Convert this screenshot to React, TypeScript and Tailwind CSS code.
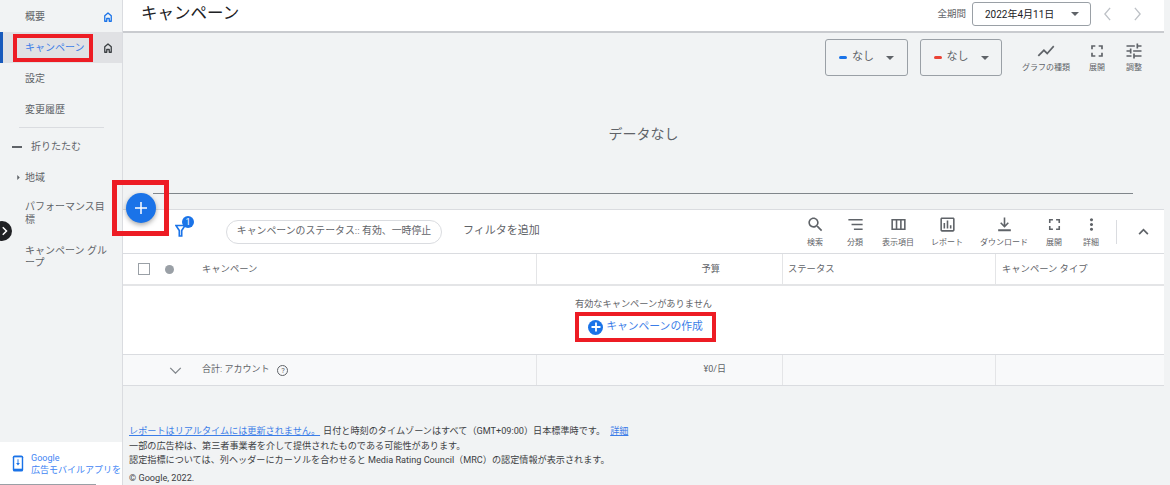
const P = {
  chart: "M3.5 18.49l6-6.01 4 4L22 6.92l-1.41-1.41-7.09 7.97-4-4L2 16.99z",
  full: "M7 14H5v5h5v-2H7v-3zm-2-4h2V7h3V5H5v5zm12 7h-3v2h5v-5h-2v3zM14 5v2h3v3h2V5h-5z",
  tune: "M3 17v2h6v-2H3zM3 5v2h10V5H3zm10 16v-2h8v-2h-8v-2h-2v6h2zM7 9v2H3v2h4v2h2V9H7zm14 4v-2H11v2h10zm-6-4h2V7h4V5h-4V3h-2v6z",
  search: "M15.5 14h-.79l-.28-.27C15.41 12.59 16 11.11 16 9.5 16 5.91 13.09 3 9.5 3S3 5.91 3 9.5 5.91 16 9.5 16c1.61 0 3.09-.59 4.23-1.57l.27.28v.79l5 4.99L20.49 19l-4.99-5zm-6 0C7.01 14 5 11.99 5 9.5S7.01 5 9.5 5 14 7.01 14 9.5 11.99 14 9.5 14z",
  sort: "M3 5h18v2H3zM7 11h14v2H7zM10 17h11v2H10z",
  cols: "M3 5v14h18V5H3zm5.5 12H5V7h3.5v10zm5.5 0h-3.5V7H14v10zm5 0h-3V7h3v10z",
  report: "M19 3H5c-1.1 0-2 .9-2 2v14c0 1.1.9 2 2 2h14c1.1 0 2-.9 2-2V5c0-1.1-.9-2-2-2zm0 16H5V5h14v14zM7 10h2v7H7zm4-3h2v10h-2zm4 6h2v4h-2z",
  download: "M11 3h2v9.2l3.1-3.1 1.4 1.4L12 16l-5.5-5.5 1.4-1.4 3.1 3.1V3zM4 18h16v2.5H4z",
  more: "M12 8c1.1 0 2-.9 2-2s-.9-2-2-2-2 .9-2 2 .9 2 2 2zm0 2c-1.1 0-2 .9-2 2s.9 2 2 2 2-.9 2-2-.9-2-2-2zm0 6c-1.1 0-2 .9-2 2s.9 2 2 2 2-.9 2-2-.9-2-2-2z",
};

function Ic({ d, className }: { d: string; className: string }) {
  return (
    <svg viewBox="0 0 24 24" className={className} fill="currentColor">
      <path d={d} />
    </svg>
  );
}

function Home({ className }: { className: string }) {
  return (
    <svg viewBox="0 0 24 24" className={className} fill="none" stroke="currentColor" strokeWidth="2.6">
      <path d="M5.5 20.5V9.5L12 4l6.5 5.5v11h-4v-5.5h-5v5.5z" strokeLinejoin="round" />
    </svg>
  );
}

function Caret({ className }: { className: string }) {
  return (
    <svg viewBox="0 0 10 5" className={className} fill="currentColor">
      <path d="M0 0h10L5 5z" />
    </svg>
  );
}

function ChartTool({ d, label, w }: { d: string; label: string; w: string }) {
  return (
    <div className={`flex flex-col items-center ${w}`}>
      <Ic d={d} className="w-[20px] h-[20px] text-[#5f6368]" />
      <span className="text-[8px] leading-[10px] mt-[2px] text-[#5f6368] whitespace-nowrap">{label}</span>
    </div>
  );
}

function TableTool({ d, label, w }: { d: string; label: string; w: string }) {
  return (
    <div className={`flex flex-col items-center ${w}`}>
      <Ic d={d} className="w-[19px] h-[19px] text-[#5f6368]" />
      <span className="text-[8px] leading-[10px] mt-[4px] text-[#5f6368] whitespace-nowrap">{label}</span>
    </div>
  );
}

function NavRow({ children, className = "" }: { children: React.ReactNode; className?: string }) {
  return <div className={`flex items-center pl-[25px] text-[10px] text-[#5f6368] ${className}`}>{children}</div>;
}

function Metric({ color, w }: { color: string; w: string }) {
  return (
    <div className={`h-[37px] border border-[#9aa0a6] rounded-[3px] flex items-center justify-center gap-[5px] ${w}`}>
      <span className={`w-[8px] h-[3px] rounded-[2px] ${color}`} />
      <span className="text-[11px] text-[#5f6368]">なし</span>
      <Caret className="w-[8px] h-[4px] ml-[7px] text-[#5f6368]" />
    </div>
  );
}

export default function App() {
  return (
    <div
      className="relative w-[1170px] h-[485px] overflow-hidden bg-[#f1f3f4] flex"
      style={{ fontFamily: 'Roboto, "Noto Sans CJK JP", sans-serif' }}
    >
      <aside className="relative w-[123px] h-full shrink-0 border-r border-[#dadce0] flex flex-col pt-[1px]">
        <div className="h-[31px] flex items-center justify-between pl-[25px] pr-[8px] text-[10px] text-[#5f6368]">
          <span>概要</span>
          <Home className="w-[12px] h-[12px] text-[#1a73e8]" />
        </div>
        <div className="h-[31px] flex items-center justify-between pl-[22px] pr-[8px] text-[10px] text-[#3b7de8] bg-[#e0e1e4] border-l-[3px] border-[#185abc]">
          <span>キャンペーン</span>
          <Home className="w-[12px] h-[12px] text-[#3c4043]" />
        </div>
        <NavRow className="h-[31px]">設定</NavRow>
        <NavRow className="h-[31px]">変更履歴</NavRow>
        <div className="h-px bg-[#dadce0] ml-[19px] mr-[18px] mt-[2px]" />
        <div className="h-[37px] flex items-center text-[10px] text-[#5f6368] pl-[12px]">
          <span className="w-[10px] h-[2px] bg-[#5f6368]" />
          <span className="ml-[9px]">折りたたむ</span>
        </div>
        <div className="h-[25px] flex items-center text-[10px] text-[#5f6368] pl-[16px]">
          <Caret className="w-[5px] h-[3px] -rotate-90 text-[#5f6368]" />
          <span className="ml-[4px]">地域</span>
        </div>
        <NavRow className="h-[46px] pr-[12px] leading-[13px]">パフォーマンス目標</NavRow>
        <NavRow className="h-[42px] pr-[12px] leading-[12px]">キャンペーン グループ</NavRow>
        <div className="mt-auto h-[43px] bg-white flex items-center pl-[12px] text-[9px] leading-[12px] text-[#4285f4] whitespace-nowrap">
          <svg viewBox="0 0 12 18" className="w-[12px] h-[17px] shrink-0 mr-[7px]">
            <rect x="0.5" y="0.5" width="11" height="17" rx="2" fill="#1a73e8" />
            <rect x="2" y="2.5" width="8" height="12" fill="#fff" />
            <path d="M5.5 4.5h1v4h1.5L6 11 4 8.500h1.500z" fill="#1a73e8" />
          </svg>
          <div>
            <div>Google</div>
            <div>広告モバイルアプリを</div>
          </div>
        </div>
      </aside>

      <main className="w-[1041px] h-full flex flex-col shrink-0">
        <header className="h-[33px] shrink-0 bg-white border-b-2 border-[#c9cbcf] flex items-center pl-[18px] pr-[12px]">
          <h1 className="text-[16.500px] font-normal text-[#202124] leading-none -mt-[3px]">キャンペーン</h1>
          <span className="ml-auto text-[9.500px] text-[#5f6368] -mt-[3px]">全期間</span>
          <div className="ml-[6px] w-[119px] h-[24px] border border-[#9aa0a6] rounded-[3px] flex items-center justify-between pl-[12px] pr-[11px] -mt-[3px]">
            <span className="text-[10px] text-[#202124]">2022年4月11日</span>
            <Caret className="w-[8px] h-[4px] text-[#5f6368]" />
          </div>
          <div className="w-[31px] flex justify-center -mt-[3px] ml-[1px]">
            <svg viewBox="0 0 10 16" className="w-[9px] h-[14px] text-[#bdc1c6]" fill="none" stroke="currentColor" strokeWidth="1.500"><path d="M8 1L2 8l6 7" /></svg>
          </div>
          <div className="w-[29px] flex justify-center -mt-[3px]">
            <svg viewBox="0 0 10 16" className="w-[9px] h-[14px] text-[#bdc1c6]" fill="none" stroke="currentColor" strokeWidth="1.500"><path d="M2 1l6 7-6 7" /></svg>
          </div>
        </header>

        <section className="h-[176px] shrink-0 flex flex-col">
          <div className="flex justify-end items-start pt-[6px] pr-[16px] shrink-0">
            <Metric color="bg-[#1a73e8]" w="w-[83px]" />
            <Metric color="bg-[#ea4335]" w="w-[82px] ml-[12px]" />
            <div className="ml-[16px] flex pt-[2px]">
              <ChartTool d={P.chart} label="グラフの種類" w="w-[56px]" />
              <ChartTool d={P.full} label="展開" w="w-[46px]" />
              <ChartTool d={P.tune} label="調整" w="w-[28px]" />
            </div>
          </div>
          <div className="flex-1 flex items-center justify-center text-[14px] text-[#5f6368]">データなし</div>
          <div className="h-px bg-[#80868b] ml-[30px] mr-[31px] mb-[15px] shrink-0" />
        </section>

        <section className="bg-white border-t border-[#dadce0] shrink-0">
          <div className="h-[44px] flex items-center border-b border-[#dadce0]">
            <div className="relative ml-[49px] w-[16px] h-[16px]">
              <svg viewBox="0 0 12 14" className="absolute left-[3px] top-0 w-[11px] h-[13px]">
                <path d="M1 1.500h10L7.300 7v6H4.700V7z" fill="none" stroke="#1a73e8" strokeWidth="1.800" />
              </svg>
              <span className="absolute left-[10px] -top-[8px] w-[12px] h-[12px] rounded-full bg-[#1a73e8] text-white text-[9px] leading-[12px] text-center">1</span>
            </div>
            <div className="ml-[38px] w-[216px] h-[24px] border border-[#dadce0] rounded-full flex items-center justify-center text-[9.900px] text-[#5f6368] whitespace-nowrap">
              キャンペーンのステータス:: 有効、一時停止
            </div>
            <span className="ml-[21px] text-[11px] text-[#5f6368]">フィルタを追加</span>
            <div className="ml-auto flex items-center">
              <TableTool d={P.search} label="検索" w="w-[40px]" />
              <TableTool d={P.sort} label="分類" w="w-[40px]" />
              <TableTool d={P.cols} label="表示項目" w="w-[46px]" />
              <TableTool d={P.report} label="レポート" w="w-[52px]" />
              <TableTool d={P.download} label="ダウンロード" w="w-[62px]" />
              <TableTool d={P.full} label="展開" w="w-[38px]" />
              <TableTool d={P.more} label="詳細" w="w-[36px]" />
              <span className="w-px h-[24px] bg-[#dadce0] ml-[7px]" />
              <div className="w-[47px] flex justify-center pl-[6px]">
                <svg viewBox="0 0 12 8" className="w-[11px] h-[7px] text-[#5f6368]" fill="none" stroke="currentColor" strokeWidth="2"><path d="M1 7l5-5 5 5" /></svg>
              </div>
            </div>
          </div>

          <div className="h-[32px] flex items-stretch border-b-2 border-[#e4e5e7] text-[9.300px] text-[#5f6368]">
            <div className="w-[414px] flex items-center pl-[15px] border-r border-[#e4e5e7]">
              <span className="w-[12px] h-[12px] border border-[#9aa0a6]" />
              <span className="w-[9px] h-[9px] rounded-full bg-[#9aa0a6] ml-[15px]" />
              <span className="ml-[28px]">キャンペーン</span>
            </div>
            <div className="w-[246px] flex items-center justify-end pr-[62px] border-r border-[#e4e5e7]">予算</div>
            <div className="w-[213px] flex items-center pl-[5px] border-r border-[#e4e5e7]">ステータス</div>
            <div className="flex-1 flex items-center pl-[6px]">キャンペーン タイプ</div>
          </div>

          <div className="h-[68px] flex flex-col items-center">
            <div className="text-[9.200px] text-[#5f6368] mt-[12px] leading-[12px]">有効なキャンペーンがありません</div>
            <div className="mt-[8px] ml-[4px] flex items-center gap-[3px] text-[10.800px] text-[#3b7de8] h-[18px]">
              <span className="w-[15px] h-[15px] rounded-full bg-[#1a73e8] text-white flex items-center justify-center">
                <svg viewBox="0 0 10 10" className="w-[10px] h-[10px]" fill="none" stroke="currentColor" strokeWidth="1.800"><path d="M5 0.500v9M0.500 5h9" /></svg>
              </span>
              キャンペーンの作成
            </div>
          </div>
        </section>

        <div className="h-[32px] shrink-0 flex items-stretch bg-[#f8f9fa] border-y border-[#dadce0] text-[9px] text-[#5f6368]">
          <div className="w-[414px] flex items-center pl-[46px] border-r border-[#e4e5e7]">
            <svg viewBox="0 0 14 8" className="w-[13px] h-[7px] text-[#80868b]" fill="none" stroke="currentColor" strokeWidth="1.500"><path d="M1 1l6 6 6-6" /></svg>
            <span className="ml-[20px]">合計: アカウント</span>
            <span className="ml-[8px] w-[11px] h-[11px] rounded-full border border-[#5f6368] text-[7.500px] leading-[9px] text-center">?</span>
          </div>
          <div className="w-[246px] flex items-center justify-end pr-[56px] border-r border-[#e4e5e7]">¥0/日</div>
          <div className="w-[213px] border-r border-[#e4e5e7]" />
        </div>

        <footer className="pl-[6px] mt-[38px] text-[9.150px] leading-[14.600px] text-[#3c4043] whitespace-nowrap">
          <div>
            <span className="text-[#3b7de8] underline">レポートはリアルタイムには更新されません。</span>
            <span className="ml-[3px]">日付と時刻のタイムゾーンはすべて（GMT+09:00）日本標準時です。</span>
            <span className="text-[#3b7de8] underline ml-[5px]">詳細</span>
          </div>
          <div>一部の広告枠は、第三者事業者を介して提供されたものである可能性があります。</div>
          <div>認定指標については、列ヘッダーにカーソルを合わせると Media Rating Council（MRC）の認定情報が表示されます。</div>
          <div className="mt-[3px]">© Google, 2022.</div>
        </footer>
      </main>

      <button className="absolute left-[126px] top-[193px] w-[30px] h-[30px] rounded-full bg-[#1a73e8] shadow-[0_2px_5px_rgba(0,0,0,0.35)] flex items-center justify-center text-white">
        <svg viewBox="0 0 12 12" className="w-[12px] h-[12px]" fill="none" stroke="currentColor" strokeWidth="1.500"><path d="M6 0v12M0 6h12" /></svg>
      </button>
      <div className="absolute left-[-8px] top-[221px] w-[20px] h-[20px] rounded-full bg-[#202124] flex items-center justify-end pr-[4px] text-white">
        <svg viewBox="0 0 8 12" className="w-[6px] h-[10px]" fill="none" stroke="currentColor" strokeWidth="2"><path d="M1 1l5 5-5 5" /></svg>
      </div>
      <div className="absolute left-[13px] top-[34px] w-[80px] h-[28px] border-[4px] border-[#ed1c24]" />
      <div className="absolute left-[112px] top-[180px] w-[57px] h-[56px] border-[5px] border-[#ed1c24]" />
      <div className="absolute left-[575px] top-[312px] w-[141px] h-[30px] border-[4px] border-[#ed1c24]" />
      <div className="absolute left-0 bottom-0 w-[96px] h-[1px] bg-[#9aa0a6]" />
    </div>
  );
}
